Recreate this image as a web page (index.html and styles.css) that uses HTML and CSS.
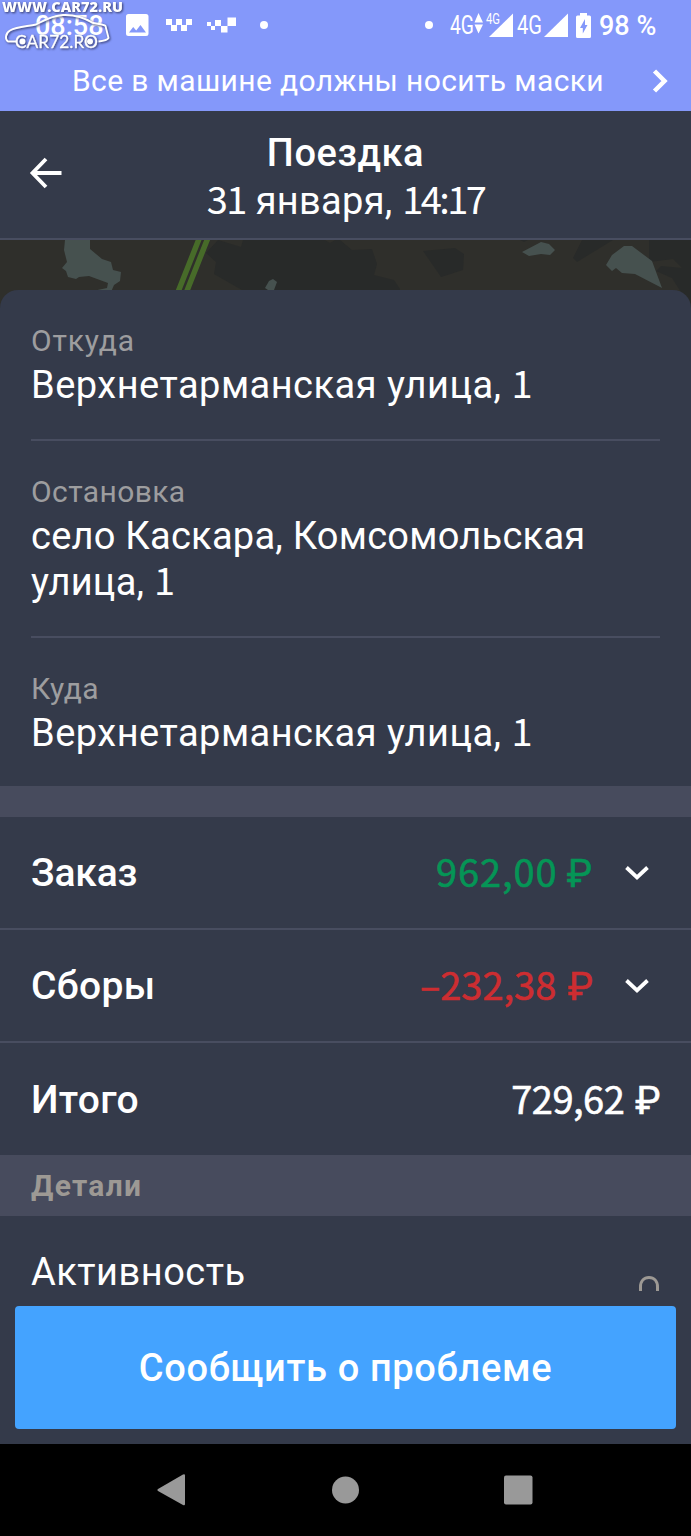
FILE: index.html
```html
<!DOCTYPE html>
<html lang="ru">
<head>
<meta charset="utf-8">
<title>Поездка</title>
<link rel="stylesheet" href="styles.css">
</head>
<body>
<div class="screen">
  <div class="top">
    <div class="statusbar">
      <span class="clock">08:58</span>
      <svg class="notifs" width="160" height="30" viewBox="120 10 160 30" fill="#fff">
        <path fill-rule="evenodd" d="M128.500 14h17.500a2.500 2.500 0 0 1 2.500 2.500v17a2.500 2.500 0 0 1-2.500 2.500h-17.500a2.500 2.500 0 0 1-2.500-2.500v-17a2.500 2.500 0 0 1 2.500-2.500zM129 32.500h17l-5.500-7.500-4.300 5.500-3-3.500z"/>
        <path d="M166 19h6v6h-6zM176 19h6v6h-6zM186 19h6v6h-6zM171 25h6v6h-6zM181 25h6v6h-6z"/>
        <path d="M207 22h4v4h-4zM211 26h4v4h-4zM215 20h6v6h-6zM221 26h6.500v6.500H221zM227.500 17.500h8.500v8.500h-8.500z"/>
        <circle cx="264" cy="25" r="4"/>
      </svg>
      <span class="spacer"></span>
      <svg class="signals" width="176" height="30" viewBox="420 10 176 30" fill="#fff">
        <circle cx="429" cy="25" r="4"/>
        <text class="net" x="450" y="34" textLength="24" lengthAdjust="spacingAndGlyphs">4G</text>
        <path d="M474.500 22.500l4-9.500 4.500 9.500zM474.500 24.500l4 9 4.500-9z"/>
        <text class="net-sm" x="486" y="24" textLength="14" lengthAdjust="spacingAndGlyphs">4G</text>
        <path d="M513 13.500V37h-24z"/>
        <text class="net" x="517" y="34" textLength="25" lengthAdjust="spacingAndGlyphs">4G</text>
        <path d="M568 13.500V37h-24z"/>
        <path fill-rule="evenodd" d="M580 13h7v2.500h2.500a1.500 1.500 0 0 1 1.500 1.500v19.500a1.500 1.500 0 0 1-1.500 1.500h-12a1.500 1.500 0 0 1-1.500-1.500V17a1.500 1.500 0 0 1 1.500-1.500h2.500zM585 19l-5 9h2.800v5.500l4.700-8.500H585z"/>
      </svg>
      <span class="battery">98 %</span>
    </div>
    <div class="notice">
      <span class="notice-text">Все в машине должны носить маски</span>
      <svg class="notice-arrow" width="18" height="26" viewBox="0 0 18 26"><path d="M2.500 3l10 10-10 10" fill="none" stroke="#fff" stroke-width="4.500"/></svg>
    </div>
    <svg class="watermark" width="126" height="54" viewBox="0 0 126 54">
      <text class="wm-url" x="2" y="12" textLength="121" lengthAdjust="spacingAndGlyphs">WWW.CAR72.RU</text>
      <path d="M17 41.500H8c-3-2-3-8 2-11 7-4 17-4 26-6 8-4 16-9 27-9.500 13-.5 22 3 30 8 5 1 11 1 12.500 3l3 12c-1 2-6 3-10 3.500" fill="none" stroke="#fff" stroke-width="1.900"/>
      <circle cx="22.500" cy="41.500" r="3" fill="#fff"/>
      <circle cx="90" cy="41.500" r="3" fill="#fff"/>
      <text class="wm-name" x="15" y="47.500" textLength="83" lengthAdjust="spacingAndGlyphs">CAR72.RO</text>
    </svg>
  </div>

  <header class="header">
    <svg class="back" width="34" height="34" viewBox="0 0 34 34"><path d="M32.500 17H4M17 3L3.500 17 17 31" fill="none" stroke="#fff" stroke-width="3.800"/></svg>
    <h1 class="title">Поездка</h1>
    <div class="date"><span class="num">31</span> января, <span class="num time">14:17</span></div>
  </header>

  <svg class="map" width="691" height="68" viewBox="0 240 691 68">
    <rect x="0" y="240" width="691" height="68" fill="#2f2f2b"/>
    <g fill="#282a29">
      <path d="M243 240h82l5 3 5-3h5l12 10 20-1 5 15-3 11 20 5 6 9v19H260l-18-18-28-16 2-12-10-9 12-13 23 7z"/>
      <path d="M423 251l32-3 9 6-1 16-22 7z"/>
      <path d="M582 240h31l-36 22-4-4zM649 240h42v68l-19-30-16-7 5-5 21 2-9-9-24 3zM520 240h8l-4 2z"/>
    </g>
    <g fill="#46514f">
      <path d="M65 240h25v9l12 10 9 3 2 8 8 2-1 9-6 4-3 7H88l19-4 1-5-19-7-10 1-3 2-8-2-2-6-4-3 5-6-3-12z"/>
      <path d="M265 288l4-7 4-2 4 3-3 8h-6z"/>
      <path d="M522 252l19-10 8 2 6 6-5 5-9-1-12 2z"/>
      <path d="M606 265l6-10 12-9 8 0 20 15 10 27-27-14-13-1-6-5-4 3z"/>
    </g>
    <path d="M199 239l-21 53M207.500 239l-21 53" stroke="#476b29" stroke-width="5.500"/>
  </svg>

  <main class="card">
    <section class="stop">
      <div class="label label-from">Откуда</div>
      <div class="address">Верхнетарманская улица, <span class="num">1</span></div>
    </section>
    <section class="stop">
      <div class="label">Остановка</div>
      <div class="address address-long">село Каскара, Комсомольская<br>улица, <span class="num">1</span></div>
    </section>
    <section class="stop">
      <div class="label">Куда</div>
      <div class="address">Верхнетарманская улица, <span class="num">1</span></div>
    </section>
  </main>

  <div class="band"></div>
  <div class="row">
    <span class="row-name order-name">Заказ</span>
    <span class="amount income">962,00 ₽</span>
    <svg class="chev" width="26" height="18" viewBox="0 0 26 18"><path d="M2.500 3.500L13 13.500 23.500 3.500" fill="none" stroke="#fff" stroke-width="3.800"/></svg>
  </div>
  <div class="row row-fees">
    <span class="row-name">Сборы</span>
    <span class="amount charge">–232,38 ₽</span>
    <svg class="chev" width="26" height="18" viewBox="0 0 26 18"><path d="M2.500 3.500L13 13.500 23.500 3.500" fill="none" stroke="#fff" stroke-width="3.800"/></svg>
  </div>
  <div class="row row-total">
    <span class="row-name">Итого</span>
    <span class="amount total">729,62 ₽</span>
  </div>
  <div class="band details">Детали</div>
  <div class="activity">
    <span class="activity-name">Активность</span>
    <svg class="zero" width="20" height="15" viewBox="0 0 20 15"><path d="M1.500 15V11C1.500 5 5 1.500 10 1.500S18.500 5 18.500 11v4" fill="none" stroke="#9d9994" stroke-width="3"/></svg>
  </div>
  <button class="report">Сообщить о проблеме</button>
  <nav class="nav">
    <svg width="691" height="92" viewBox="0 0 691 92" fill="#999">
      <path d="M158 45l25-14.500q2-1 2 1V60q0 2-2 1l-25-14q-1.500-1 0-2z"/>
      <circle cx="345.500" cy="46" r="13.500"/>
      <rect x="504" y="31.500" width="28.500" height="29" rx="2"/>
    </svg>
  </nav>
</div>
</body>
</html>
```
FILE: styles.css
```css
* { box-sizing: border-box; }
body { margin: 0; background: #343a4a; }
.screen { width: 691px; height: 1536px; display: flex; flex-direction: column; overflow: hidden; background: #343a4a; color: #fff; font-family: Roboto, "Liberation Sans", sans-serif; }
.screen > * { flex-shrink: 0; }

.top { position: relative; height: 111px; background: #8498fa; }
.statusbar { display: flex; align-items: center; height: 50px; padding: 2px 32px 0 35px; }
.clock { width: 85px; font-size: 27px; font-weight: 500; line-height: 48px; }
.notifs, .signals { margin-top: -2px; }
.spacer { flex: 1; }
.battery { width: 60px; margin-left: 3px; font-size: 27px; font-weight: 500; line-height: 48px; white-space: nowrap; }
.net { font-family: Roboto, sans-serif; font-size: 25px; }
.net-sm { font-family: Roboto, sans-serif; font-size: 14px; }
.notice { display: flex; align-items: center; height: 61px; padding: 0 21px 0 72px; }
.notice-text { flex: 1; font-size: 30px; line-height: 40px; letter-spacing: 0.38px; white-space: nowrap; }
.watermark { position: absolute; left: 0; top: 0; overflow: visible; filter: drop-shadow(1px 1px 1px #343a6a); }
.wm-url { font: 800 14.5px "Open Sans", sans-serif; fill: #fff; }
.wm-name { font: 17px Lato, sans-serif; fill: #fff; stroke: #fff; stroke-width: 0.3px; }

.header { position: relative; height: 129px; padding-top: 18px; border-bottom: 2px solid #484d60; text-align: center; }
.back { position: absolute; left: 29px; top: 45px; }
.title { margin: 0; font-size: 38px; font-weight: 500; line-height: 48px; letter-spacing: 0.6px; }
.date { font-size: 38px; line-height: 48px; letter-spacing: 0.3px; }
.num { font-family: "Noto Sans CJK SC", sans-serif; line-height: 0; letter-spacing: -1.5px; }
.time { letter-spacing: -2.6px; }

.map { display: block; }
.card { height: 496px; margin-top: -18px; padding: 0 31px; border-radius: 18px 18px 0 0; background: #343a4a; }
.stop { padding: 33px 0 31px; border-bottom: 2px solid #484d60; }
.stop:last-child { border-bottom: 0; }
.label { margin-bottom: 3px; color: #9d9d9f; font-size: 30px; line-height: 36px; letter-spacing: 0.4px; }
.label-from { letter-spacing: 0.8px; }
.address { font-size: 38px; line-height: 46px; letter-spacing: 0.48px; white-space: nowrap; }
.address-long { letter-spacing: 0.25px; }

.band { height: 31px; background: #474b5d; }
.row { display: flex; align-items: center; height: 113px; padding: 0 31px; border-bottom: 2px solid #484d60; }
.row-fees { padding-top: 1px; }
.row-total { height: 112px; padding-top: 2px; border-bottom: 0; }
.row-name { flex: 1; font-size: 39px; font-weight: 500; letter-spacing: 0.3px; line-height: 50px; }
.order-name { letter-spacing: -0.2px; }
.amount { margin-top: -4px; font-family: "Noto Sans CJK SC", Roboto, sans-serif; font-size: 38px; line-height: 50px; word-spacing: 3px; white-space: nowrap; -webkit-text-stroke: 0.6px currentColor; }
.income { color: #059556; letter-spacing: 0.9px; word-spacing: 0; }
.charge { color: #cd2d31; }
.total { letter-spacing: -0.5px; }
.chev { margin: 0 10px 0 31px; }
.details { height: 61px; padding-left: 31px; color: #9d9994; font-size: 30px; font-weight: 700; line-height: 61px; letter-spacing: 1.3px; }
.activity { display: flex; height: 90px; padding: 31px 32px 0 31px; }
.activity-name { flex: 1; font-size: 38px; line-height: 50px; letter-spacing: 0.5px; }
.zero { margin-top: 29px; }
.report { height: 123px; margin: 0 15px 15px; padding: 0; border: 0; border-radius: 4px; background: #44a3ff; color: #fff; font-family: Roboto, sans-serif; font-size: 38px; font-weight: 500; letter-spacing: 0.65px; }
.nav { height: 92px; background: #000; }
.nav svg { display: block; }
```
